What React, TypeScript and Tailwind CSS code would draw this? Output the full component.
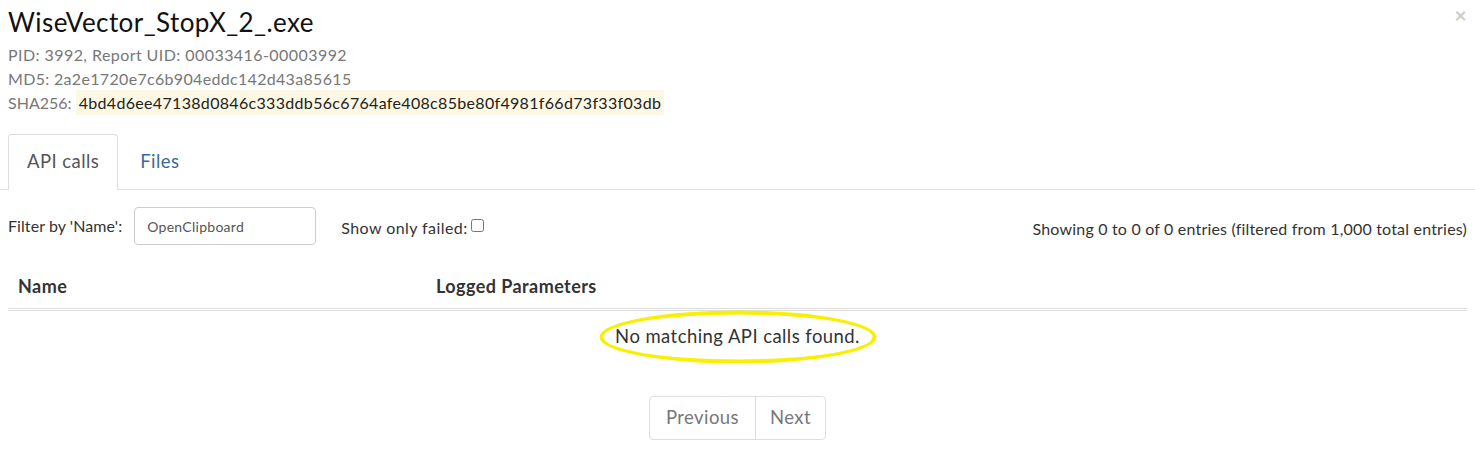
import { useState } from "react";

const font = { fontFamily: "Lato, 'Open Sans', sans-serif" };

export default function App() {
  const [filter, setFilter] = useState("OpenClipboard");
  const [onlyFailed, setOnlyFailed] = useState(false);

  return (
    <div className="relative h-[457px] w-[1475px] overflow-hidden bg-white tracking-[0.027em] text-[#333]" style={font}>
      <button className="absolute right-[8px] top-[4px] text-[21px] font-bold leading-none text-[#ccc]">×</button>

      <div className="px-2 pt-[5px]">
        <h4 className="text-[26px] leading-[34px] text-[#111]">WiseVector_StopX_2_.exe</h4>
        <div className="mt-[4px] text-[16px] leading-[24px] text-[#777]">
          <div>PID: 3992, Report UID: 00033416-00003992</div>
          <div className="tracking-[0.02em]">MD5: 2a2e1720e7c6b904eddc142d43a85615</div>
          <div className="tracking-normal">
            SHA256:{" "}
            <span className="bg-[#fcf8e3] px-[3px] py-[3px] tracking-[0.02em] text-[#222]">
              4bd4d6ee47138d0846c333ddb56c6764afe408c85be80f4981f66d73f33f03db
            </span>
          </div>
        </div>
      </div>

      <div className="mt-[19px] flex border-b border-[#ddd] px-2">
        <div className="-mb-px flex h-[56px] items-center rounded-t border border-b-white border-[#ddd] bg-white px-[18px] text-[18.5px] text-[#555]">
          API calls
        </div>
        <div className="flex h-[55px] items-center px-[22px] text-[18.5px] text-[#3a6a9b]">Files</div>
      </div>

      <div className="mt-[17px] flex items-center px-2">
        <label className="text-[16px] tracking-[0.005em] text-[#333]">Filter by 'Name':</label>
        <input
          value={filter}
          onChange={(e) => setFilter(e.target.value)}
          className="ml-[12px] h-[38px] w-[182px] rounded border border-[#ccc] px-[12px] text-[14px] tracking-[0.02em] text-[#555] outline-none"
          style={font}
        />
        <label className="ml-[25px] mt-[3px] flex items-center text-[16px] text-[#333]">
          Show only failed:
          <input
            type="checkbox"
            checked={onlyFailed}
            onChange={(e) => setOnlyFailed(e.target.checked)}
            className="ml-[3px] h-[13px] w-[13px] -translate-y-[2px]"
          />
        </label>
        <div className="ml-auto mt-[6px] text-[16px] tracking-[0.012em] text-[#333]">
          Showing 0 to 0 of 0 entries (filtered from 1,000 total entries)
        </div>
      </div>

      <div className="mx-2 mt-[25px]">
        <div className="flex h-[41px] items-start border-b-[3px] border-double border-[#ddd] pt-[3px] text-[18px] font-bold text-[#333]">
          <div className="w-[428px] pl-[10px]">Name</div>
          <div>Logged Parameters</div>
        </div>
        <div className="flex h-[52px] items-center justify-center">
          <div className="relative text-[18.5px] text-[#333]">
            <span className="absolute left-1/2 top-1/2 h-[53px] w-[277px] -translate-x-1/2 -translate-y-1/2 rounded-[50%] border-[4px] border-[#f7f000]" />
            <span className="relative">No matching API calls found.</span>
          </div>
        </div>
      </div>

      <div className="mt-[33px] flex justify-center">
        <div className="flex h-[44px] rounded border border-[#ddd] text-[18.5px] text-[#777]">
          <button className="border-r border-[#ddd] px-[16px]">Previous</button>
          <button className="px-[14px]">Next</button>
        </div>
      </div>
    </div>
  );
}
